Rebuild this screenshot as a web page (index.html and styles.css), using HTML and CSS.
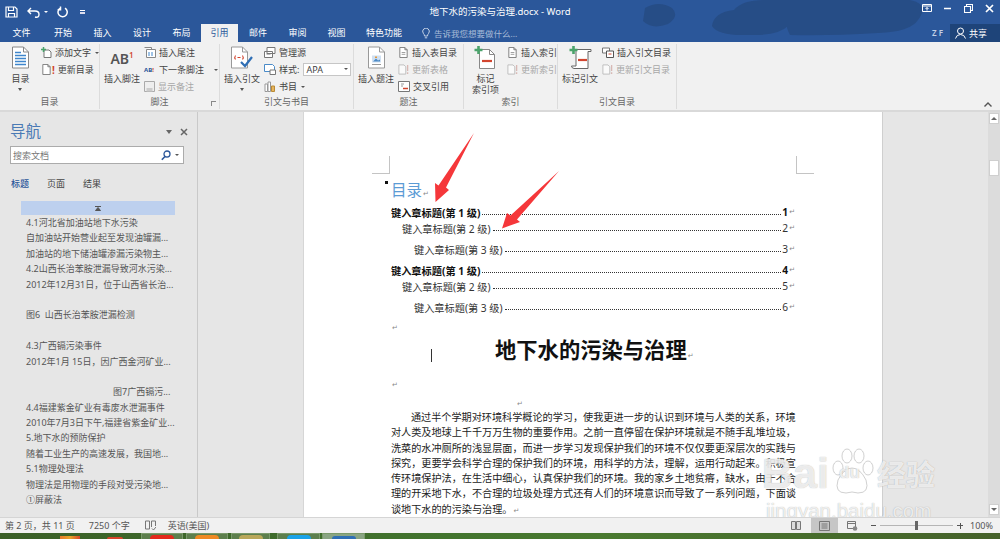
FILE: index.html
```html
<!DOCTYPE html>
<html lang="zh-CN">
<head>
    <meta charset="UTF-8">
    <meta name="viewport" content="width=device-width, initial-scale=1.0">
    <title>地下水的污染与治理.docx - Word</title>
    <link rel="stylesheet" href="styles.css">
</head>
<body>

<svg class="defs" width="0" height="0">
    <symbol id="doc" viewBox="0 0 12 12">
        <path d="M2 .5h5.5L10 3v8.5H2z" fill="#fff" stroke="#777"/>
        <path d="M7.5 .5V3H10" fill="none" stroke="#777"/>
    </symbol>
    <symbol id="doc-off" viewBox="0 0 12 12">
        <path d="M1 1h5.5L8.5 3v8H1z" fill="#fafafa" stroke="#bbb"/>
        <path d="M10.5 1v6.5M10.5 9v2" stroke="#d8b8b4" stroke-width="1.4"/>
    </symbol>
</svg>

<header class="header">
    <svg class="clouds" width="1000" height="42" viewBox="0 0 1000 42">
        <path d="M645 8q14-8 27 0 8 8-4 16-16 6-25-3zM712 26q2-14 22-16 8-10 30-10h30q10 10-6 26-10 10-40 9-30 1-36-9zM790 0h120q20 4 8 20-8 12-40 13-50 3-88 2-8-14 0-35z" fill="#25497f" opacity=".75"/>
    </svg>
    <div class="titlebar">
        <div class="qat">
            <svg width="13" height="12" viewBox="0 0 13 12"><path d="M1 1h9l2 2v8H1zM3.5 1v3.5h5V1M3.5 11V7.5h6V11" fill="none" stroke="#fff" stroke-width="1.2"/></svg>
            <svg class="qat-undo" width="14" height="11" viewBox="0 0 14 11"><path d="M4 1 1 4l3 3M1 4h7q4 0 4 3.5T8 10" fill="none" stroke="#fff" stroke-width="1.4"/></svg>
            <span class="qat-caret"></span>
            <svg class="qat-redo" width="12" height="12" viewBox="0 0 12 12"><path d="M8 2.2A4.6 4.6 0 1 1 3.6 2M3.5 .5v3.2H.6" fill="none" stroke="#fff" stroke-width="1.5"/></svg>
            <span class="qat-more"></span>
        </div>
        <div class="doc-title">地下水的污染与治理.docx - Word</div>
        <div class="win-btns">
            <svg width="10" height="8" viewBox="0 0 10 8"><path d="M.5 .5h9v7h-9zM.5 2h9M5 6.5V3.5M3.5 5 5 3.5 6.500 5" fill="none" stroke="#fff"/></svg>
            <svg width="8" height="8" viewBox="0 0 8 8"><path d="M0 4.500h7" stroke="#fff" stroke-width="1.500"/></svg>
            <svg width="9" height="9" viewBox="0 0 9 9"><path d="M.5 2.500h6v6h-6zM2.500 2.500v-2h6v6h-2" fill="none" stroke="#fff" stroke-width="1.100"/></svg>
            <svg width="9" height="9" viewBox="0 0 9 9"><path d="M1 1l7 7M8 1 1 8" stroke="#fff" stroke-width="1.700"/></svg>
        </div>
    </div>
    <div class="tabs">
        <div class="tab tab-first">文件</div>
        <div class="tab tab-wide">开始</div>
        <div class="tab">插入</div>
        <div class="tab tab-wide">设计</div>
        <div class="tab">布局</div>
        <div class="tab tab-active">引用</div>
        <div class="tab tab-wide">邮件</div>
        <div class="tab">审阅</div>
        <div class="tab">视图</div>
        <div class="tab tab-long">特色功能</div>
        <div class="tell-me">
            <svg width="8" height="11" viewBox="0 0 8 11"><path d="M2.500 8Q2.500 6.500 1.300 5.300A3.300 3.300 0 1 1 6.700 5.300Q5.500 6.500 5.500 8zM2.800 9.800h2.400" fill="none" stroke="#c5d2e6"/></svg>
            <span>告诉我您想要做什么...</span>
        </div>
        <div class="user">Z F</div>
        <div class="share">
            <svg width="11" height="12" viewBox="0 0 11 12"><circle cx="5.500" cy="4" r="3" fill="none" stroke="#fff"/><path d="M.5 11.500Q1.500 7.500 5.500 7.500T10.500 11.500" fill="none" stroke="#fff"/></svg>
            <span>共享</span>
        </div>
    </div>
</header>

<section class="ribbon">
    <div class="group group-toc">
        <div class="group-body">
            <div class="big">
                <svg class="big-ico" width="17" height="22" viewBox="0 0 17 22"><path d="M.5 .5h11l5 5v16H.5z" fill="#fff" stroke="#888"/><path d="M11.500 .5v5h5" fill="none" stroke="#888"/><path d="M3 6h6M3 9h11M3 12h11M3 15h11M3 18h11" stroke="#3f86cc" stroke-width="1.300"/></svg>
                <span>目录</span>
                <span class="caret"></span>
            </div>
            <div class="smalls">
                <div class="small"><svg width="11" height="11" viewBox="0 0 11 11"><path d="M3 3h5l2 2v5.500H3z" fill="#fff" stroke="#777"/><path d="M2.500 0v5M0 2.500h5" stroke="#4ba36b" stroke-width="1.500"/></svg>添加文字<span class="caret-side"></span></div>
                <div class="small"><svg width="11" height="11" viewBox="0 0 12 12"><use href="#doc"/></svg><b class="bang">!</b>更新目录</div>
            </div>
        </div>
        <div class="group-label">目录</div>
    </div>

    <div class="group group-foot">
        <div class="group-body">
            <div class="big big-foot">
                <div class="ab">AB<sup>1</sup></div>
                <span>插入脚注</span>
            </div>
            <div class="smalls">
                <div class="small"><svg width="12" height="11" viewBox="0 0 12 11"><path d="M.5 .5h7v2M2.500 2.500h9v8h-9z" fill="#fff" stroke="#888"/><path d="M5 5v4M8 5v4" stroke="#3f86cc"/></svg>插入尾注</div>
                <div class="small"><span class="ab-next">AB<i>!</i></span>下一条脚注<span class="caret-side caret-far"></span></div>
                <div class="small small-off"><svg width="11" height="11" viewBox="0 0 11 11"><path d="M.5 .5h10v10H.5z" fill="#eee" stroke="#aaa"/><path d="M2.500 7h6v3.500h-6z" fill="#ccc"/></svg>显示备注</div>
            </div>
        </div>
        <div class="group-label">脚注</div>
        <span class="launcher"></span>
    </div>

    <div class="group group-cite">
        <div class="group-body">
            <div class="big">
                <svg class="big-ico" width="22" height="22" viewBox="0 0 22 22"><path d="M.5 .5h11l5 5v16H.5z" fill="#fff" stroke="#999"/><path d="M11.500 .5v5h5" fill="none" stroke="#999"/><path d="M4.500 9q-1.500 2 0 4M11.500 9q1.500 2 0 4M6.500 11h3" fill="none" stroke="#d2452f" stroke-width="1.100"/><path d="M10 15.500l4 4 7-9" fill="none" stroke="#2f6fb5" stroke-width="2.200"/></svg>
                <span>插入引文</span>
                <span class="caret"></span>
            </div>
            <div class="smalls">
                <div class="small"><svg width="12" height="11" viewBox="0 0 12 11"><path d="M3 .5h8v6H3zM.5 4.500h8v6h-8z" fill="#fff" stroke="#777"/><path d="M2.500 7h4" stroke="#777"/></svg>管理源</div>
                <div class="small"><svg width="12" height="11" viewBox="0 0 12 11"><path d="M.5 .5h8l2 2v5h-10z" fill="#fff" stroke="#4a8bc8"/><path d="M6 6h5.500v4.500H6z" fill="#fff" stroke="#777"/></svg>样式:<div class="select">APA<span class="select-caret"></span></div></div>
                <div class="small"><svg width="12" height="11" viewBox="0 0 12 11"><path d="M1 3h2.500v7.500H1zM4 1h2.500v9.500H4z" fill="#fff" stroke="#999"/><path d="M7.500 5h3v5.500h-3z" fill="#e7b45c" stroke="#b98a35"/></svg>书目<span class="caret-side"></span></div>
            </div>
        </div>
        <div class="group-label">引文与书目</div>
    </div>

    <div class="group group-cap">
        <div class="group-body">
            <div class="big">
                <svg class="big-ico" width="17" height="22" viewBox="0 0 17 22"><path d="M.5 .5h11l5 5v16H.5z" fill="#fff" stroke="#999"/><path d="M11.500 .5v5h5" fill="none" stroke="#999"/><path d="M4 9h9v7H4z" fill="#cfe0f2"/><path d="M5 15l3-3 2 2 2-1v2z" fill="#4c8ac6"/><path d="M7 10h2v1.500H7z" fill="#e59a3c"/><path d="M4 18h9" stroke="#999"/></svg>
                <span>插入题注</span>
            </div>
            <div class="smalls">
                <div class="small"><svg width="11" height="11" viewBox="0 0 12 12"><use href="#doc"/><path d="M4 6h4M4 8h4" stroke="#999"/></svg>插入表目录</div>
                <div class="small small-off"><svg width="11" height="11" viewBox="0 0 12 12"><use href="#doc-off"/></svg>更新表格</div>
                <div class="small"><svg width="12" height="11" viewBox="0 0 12 11"><path d="M.5 .5h11v10H.5z" fill="#fff" stroke="#777"/><path d="M3 3h3M3 5h2" stroke="#999"/><path d="M5 7.500h5" stroke="#d2452f" stroke-width="1.500"/></svg>交叉引用</div>
            </div>
        </div>
        <div class="group-label">题注</div>
    </div>

    <div class="group group-index">
        <div class="group-body">
            <div class="big big-two">
                <svg class="big-ico" width="22" height="23" viewBox="0 0 22 23"><path d="M5.500 3.500h10l5 5v14h-15z" fill="#fff" stroke="#888"/><path d="M15.500 3.500v5h5" fill="none" stroke="#888"/><path d="M8 15h10" stroke="#d2452f" stroke-width="2.200"/><path d="M4.500 0v8M.5 4h8" stroke="#4ba36b" stroke-width="2.600"/></svg>
                <span>标记</span>
                <span>索引项</span>
            </div>
            <div class="smalls">
                <div class="small"><svg width="11" height="11" viewBox="0 0 12 12"><use href="#doc"/><path d="M4 6h4M4 8h4" stroke="#999"/></svg>插入索引</div>
                <div class="small small-off"><svg width="11" height="11" viewBox="0 0 12 12"><use href="#doc-off"/></svg>更新索引</div>
            </div>
        </div>
        <div class="group-label">索引</div>
    </div>

    <div class="group group-auth">
        <div class="group-body">
            <div class="big">
                <svg class="big-ico" width="23" height="23" viewBox="0 0 23 23"><path d="M7 3.500h15v2h-3v17H5q-2.500-.5-2.500-2.500H7z" fill="#fff" stroke="#666"/><path d="M9 14h9" stroke="#d2452f" stroke-width="2.200"/><path d="M4.500 0v8M.5 4h8" stroke="#4ba36b" stroke-width="2.600"/></svg>
                <span>标记引文</span>
            </div>
            <div class="smalls">
                <div class="small"><svg width="12" height="11" viewBox="0 0 12 11"><path d="M.5 1h7v5h-7z" fill="#fff" stroke="#777"/><path d="M4.500 4h7v6.500h-7z" fill="#fff" stroke="#555"/><path d="M6.500 7h3" stroke="#d2452f"/></svg>插入引文目录</div>
                <div class="small small-off"><svg width="11" height="11" viewBox="0 0 12 12"><use href="#doc-off"/></svg>更新引文目录</div>
            </div>
        </div>
        <div class="group-label">引文目录</div>
    </div>

    <svg class="collapse" width="8" height="5" viewBox="0 0 8 5"><path d="M.5 4.500 4 1l3.500 3.500" fill="none" stroke="#555" stroke-width="1.400"/></svg>
</section>

<main class="main">
    <aside class="nav">
        <div class="nav-head">
            <div class="nav-title">导航</div>
            <span class="nav-caret"></span>
            <svg width="8" height="8" viewBox="0 0 8 8"><path d="M1 1l6 6M7 1 1 7" stroke="#666" stroke-width="1.500"/></svg>
        </div>
        <div class="nav-search">
            <span>搜索文档</span>
            <svg width="10" height="11" viewBox="0 0 10 11"><circle cx="6" cy="4" r="3" fill="none" stroke="#2b579a" stroke-width="1.300"/><path d="M4 6.500.8 9.800" stroke="#2b579a" stroke-width="1.600"/></svg>
            <span class="search-caret"></span>
        </div>
        <div class="nav-tabs">
            <span class="nav-tab nav-tab-on">标题</span>
            <span class="nav-tab">页面</span>
            <span class="nav-tab">结果</span>
        </div>
        <div class="nav-top"><svg width="6" height="5" viewBox="0 0 6 5"><path d="M0 .5h6M.5 4.500h5L3 1.500z" stroke="#555" fill="#555"/></svg></div>
        <ul class="nav-list">
            <li>4.1河北省加油站地下水污染</li>
            <li>自加油站开始营业起至发现油罐漏...</li>
            <li>加油站的地下储油罐渗漏污染物主...</li>
            <li>4.2山西长治苯胺泄漏导致河水污染...</li>
            <li>2012年12月31日，位于山西省长治...</li>
            <li></li>
            <li>图6&nbsp; 山西长治苯胺泄漏检测</li>
            <li></li>
            <li>4.3广西镉污染事件</li>
            <li>2012年1月 15日，因广西金河矿业...</li>
            <li></li>
            <li class="nav-far">图7广西镉污...</li>
            <li>4.4福建紫金矿业有毒废水泄漏事件</li>
            <li>2010年7月3日下午,福建省紫金矿业...</li>
            <li>5.地下水的预防保护</li>
            <li>随着工业生产的高速发展，我国地...</li>
            <li>5.1物理处理法</li>
            <li>物理法是用物理的手段对受污染地...</li>
            <li>①屏蔽法</li>
        </ul>
    </aside>

    <div class="doc">
        <article class="page">
            <h1 class="toc-title">目录<span class="ret">↵</span></h1>
            <div class="toc toc-1"><span>键入章标题(第 1 级)</span><i class="leader"></i><span>1</span><span class="ret">↵</span></div>
            <div class="toc toc-2"><span>键入章标题(第 2 级)</span><i class="leader"></i><span>2</span><span class="ret">↵</span></div>
            <div class="toc toc-3"><span>键入章标题(第 3 级)</span><i class="leader"></i><span>3</span><span class="ret">↵</span></div>
            <div class="toc toc-1 toc-gap"><span>键入章标题(第 1 级)</span><i class="leader"></i><span>4</span><span class="ret">↵</span></div>
            <div class="toc toc-2"><span>键入章标题(第 2 级)</span><i class="leader"></i><span>5</span><span class="ret">↵</span></div>
            <div class="toc toc-3"><span>键入章标题(第 3 级)</span><i class="leader"></i><span>6</span><span class="ret">↵</span></div>
            <div class="mark mark-a"><span class="ret">↵</span></div>
            <h2 class="doc-head">地下水的污染与治理<span class="ret">↵</span></h2>
            <div class="mark mark-b"><span class="ret">↵</span></div>
            <div class="mark mark-c"><span class="ret">↵</span></div>
            <p class="para">
                <span class="line line-first">通过半个学期对环境科学概论的学习，使我更进一步的认识到环境与人类的关系，环境</span>
                <span class="line">对人类及地球上千千万万生物的重要作用。之前一直停留在保护环境就是不随手乱堆垃圾，</span>
                <span class="line">洗菜的水冲厕所的浅显层面，而进一步学习发现保护我们的环境不仅仅要更深层次的实践与</span>
                <span class="line">探究，更要学会科学合理的保护我们的环境，用科学的方法，理解，运用行动起来。积极宣</span>
                <span class="line">传环境保护法，在生活中细心，认真保护我们的环境。我的家乡土地贫瘠，缺水，由于不合</span>
                <span class="line">理的开采地下水，不合理的垃圾处理方式还有人们的环境意识而导致了一系列问题，下面谈</span>
                <span class="line line-last">谈地下水的的污染与治理。<span class="ret">↵</span></span>
            </p>
            <i class="crop crop-left"></i>
            <i class="crop crop-right"></i>
            <i class="dot"></i>
            <i class="cursor"></i>
        </article>
    </div>

    <div class="vscroll">
        <div class="vbtn"><span class="vup"></span></div>
        <div class="vthumb"></div>
        <div class="vbtn vbtn-down"><span class="vdown"></span></div>
    </div>

    <!-- red arrows drawn over the page -->
    <svg class="arrows" width="1000" height="405" viewBox="0 112 1000 405">
        <path d="M474 133 446 187.500 449 190 435.500 202 435 183 438.500 185.500z" fill="#f5373a"/>
        <path d="M559 171 517 219.500 520 222 502 228.500 507 213 510.500 215.500z" fill="#f5373a"/>
    </svg>

    <!-- baidu watermark -->
    <div class="wm">
        <div class="wm-top">
            <span class="wm-bai">Bai</span>
            <svg width="44" height="50" viewBox="0 0 44 50" class="wm-paw"><g fill="rgba(255,255,255,.55)" stroke="rgba(150,150,150,.45)"><ellipse cx="8" cy="20" rx="5" ry="7"/><ellipse cx="17" cy="8" rx="5" ry="7"/><ellipse cx="29" cy="8" rx="5" ry="7"/><ellipse cx="38" cy="20" rx="5" ry="7"/><path d="M22 20q8 0 14 12 4 13-8 13-6-2-12 0-12 0-8-13 6-12 14-12z"/></g></svg>
            <span class="wm-du">du</span>
            <span class="wm-jy">经验</span>
        </div>
        <div class="wm-url">jingyan.baidu.com</div>
    </div>
</main>

<footer class="status">
    <span class="st-page">第 2 页，共 11 页</span>
    <span class="st-words">7250 个字</span>
    <svg class="st-book" width="11" height="11" viewBox="0 0 11 11"><path d="M.5 1h4v8h-4zM6.500 1h4v5M6.500 1v6" fill="none" stroke="#777"/><path d="M7 8.500l1.500 1.500L11 7" fill="none" stroke="#777"/></svg>
    <span>英语(美国)</span>
    <div class="views">
        <svg width="10" height="9" viewBox="0 0 10 9"><path d="M.5 .5h4v8h-4zM5.500 .5h4v8h-4z" fill="#ddd" stroke="#777"/></svg>
        <div class="view-on"><svg width="11" height="10" viewBox="0 0 11 10"><path d="M.5 .5h10v9H.5zM2.500 3h6M2.500 5h6M2.500 7h6" fill="none" stroke="#777"/></svg></div>
        <svg class="view-web" width="11" height="10" viewBox="0 0 11 10"><path d="M.5 .5h8v7h-8zM.5 2.500h8" fill="none" stroke="#777"/><circle cx="8" cy="7.500" r="2.300" fill="#888"/></svg>
    </div>
    <div class="zoom">
        <span class="zoom-minus"></span>
        <div class="zoom-track"><i class="zoom-thumb"></i></div>
        <span class="zoom-plus"></span>
    </div>
    <span class="st-pct">100%</span>
</footer>

<div class="taskbar">
    <i class="tray tray-a"></i>
    <i class="tray tray-b"></i>
    <div class="task task-1"><i></i></div>
    <div class="task task-2"><i></i></div>
    <div class="task task-3"><i></i></div>
    <div class="task task-4"><i></i></div>
    <div class="task task-5"><i></i></div>
</div>

</body>
</html>
```

FILE: styles.css
```css
* {
    box-sizing: border-box;
}

html, body {
    margin: 0;
    height: 539px;
    overflow: hidden;
}

body {
    display: flex;
    flex-direction: column;
    font-family: "Noto Sans", "Noto Sans CJK SC", sans-serif;
    font-size: 9px;
    color: #444;
    background-color: #e6e6e6;
}

.defs {
    display: block;
    height: 0;
}

/* title bar and tabs */
.header {
    position: relative;
    flex: none;
    height: 42px;
    background-color: #2b579a;
    color: #fff;
    overflow: hidden;
}

.clouds {
    position: absolute;
    left: 0;
    top: 0;
}

.titlebar {
    position: relative;
    display: grid;
    grid-template-columns: 1fr auto 1fr;
    align-items: center;
    height: 24px;
}

.qat {
    display: flex;
    align-items: center;
    padding-left: 5px;
}

.qat-undo {
    margin-left: 9px;
}

.qat-caret {
    margin-left: 3px;
    border-top: 2px solid #fff;
    border-left: 2px solid transparent;
    border-right: 2px solid transparent;
}

.qat-redo {
    margin-left: 9px;
}

.qat-more {
    width: 5px;
    height: 4px;
    margin-left: 11px;
    border-top: 1px solid #fff;
    border-bottom: 2px solid #dde;
}

.doc-title {
    font-size: 9.5px;
    line-height: 22px;
}

.win-btns {
    display: flex;
    align-items: center;
    justify-content: flex-end;
    gap: 12px;
    padding-right: 6px;
    padding-bottom: 8px;
    height: 24px;
}

.tabs {
    position: relative;
    display: flex;
    align-items: stretch;
    height: 18px;
}

.tab {
    width: 39px;
    line-height: 18px;
    text-align: center;
    font-size: 9px;
}

.tab-first {
    width: 43px;
}

.tab-wide {
    width: 40px;
}

.tab-long {
    width: 56px;
}

.tab-active {
    width: 37px;
    background-color: #f1f1f1;
    color: #2b579a;
}

.tell-me {
    display: flex;
    align-items: center;
    gap: 4px;
    margin-left: 10px;
    font-size: 8.5px;
    color: #a9bcd8;
}

.user {
    margin-left: auto;
    margin-right: 7px;
    line-height: 18px;
    font-size: 8px;
    font-weight: 600;
    color: #c5d2e6;
}

.share {
    display: flex;
    align-items: center;
    gap: 3px;
    width: 50px;
    padding-left: 5px;
    background-color: #1e4479;
}

/* ribbon */
.ribbon {
    position: relative;
    flex: none;
    display: flex;
    height: 70px;
    padding-top: 2px;
    background-color: #f1f1f1;
    border-bottom: 2px solid #d9d9d9;
}

.group {
    position: relative;
    display: flex;
    flex-direction: column;
    height: 65px;
    border-right: 1px solid #dcdcdc;
}

.group-toc { width: 100px; }
.group-foot { width: 120px; }
.group-cite { width: 134px; }
.group-cap { width: 110px; }
.group-index { width: 94px; }
.group-auth { width: 119px; }

.group-body {
    flex: 1;
    display: flex;
    min-height: 0;
}

.group-label {
    height: 14px;
    line-height: 14px;
    text-align: center;
    color: #666;
}

.big {
    display: flex;
    flex-direction: column;
    align-items: center;
    width: 36px;
    margin-left: 4px;
    line-height: 11px;
    white-space: nowrap;
}

.big-ico {
    height: 23px;
    margin: 2px 0 4px;
}

.big-two span {
    line-height: 11px;
}

.big-foot {
    margin-left: 4px;
}

.ab {
    height: 23px;
    margin: 5px 0 1px;
    font-size: 14px;
    font-weight: 600;
    line-height: 20px;
    color: #555;
}

.ab sup {
    font-size: 8px;
    line-height: 0;
    color: #d2452f;
}

.caret {
    margin-top: 4px;
    border-top: 3px solid #555;
    border-left: 2px solid transparent;
    border-right: 2px solid transparent;
}

.smalls {
    display: flex;
    flex-direction: column;
    margin-left: 4px;
}

.small {
    display: flex;
    align-items: center;
    gap: 3px;
    height: 17px;
    white-space: nowrap;
}

.small-off {
    color: #a8a8a8;
}

.bang {
    margin-left: -3px;
    font-size: 10px;
    color: #d2452f;
}

.caret-side {
    margin-left: 1px;
    border-top: 2px solid #555;
    border-left: 2px solid transparent;
    border-right: 2px solid transparent;
}

.caret-far {
    margin-left: 7px;
}

.ab-next {
    width: 12px;
    font-size: 6px;
    font-weight: 700;
    color: #2b579a;
    line-height: 8px;
}

.ab-next i {
    color: #d2452f;
    font-style: normal;
}

.select {
    position: relative;
    width: 48px;
    height: 13px;
    margin-left: 1px;
    padding-left: 2px;
    line-height: 12px;
    background-color: #fff;
    border: 1px solid #c6c6c6;
}

.select-caret {
    position: absolute;
    right: 2px;
    top: 4px;
    border-top: 2px solid #555;
    border-left: 2px solid transparent;
    border-right: 2px solid transparent;
}

.launcher {
    position: absolute;
    right: 3px;
    bottom: 3px;
    width: 5px;
    height: 5px;
    border-left: 1px solid #888;
    border-top: 1px solid #888;
}

.collapse {
    position: absolute;
    right: 8px;
    bottom: 3px;
}

/* main area */
.main {
    position: relative;
    flex: 1;
    display: flex;
    min-height: 0;
    overflow: hidden;
}

.nav {
    flex: none;
    width: 198px;
    padding: 10px 0 0 10px;
    background-color: #e6e6e6;
    border-right: 1px solid #c9c9c9;
}

.nav-head {
    display: flex;
    align-items: center;
    height: 19px;
    padding-right: 9px;
}

.nav-title {
    flex: 1;
    font-size: 15.5px;
    line-height: 19px;
    color: #4a7ab5;
}

.nav-caret {
    margin-right: 8px;
    border-top: 4px solid #666;
    border-left: 3px solid transparent;
    border-right: 3px solid transparent;
}

.nav-search {
    display: flex;
    align-items: center;
    width: 174px;
    height: 18px;
    margin-top: 5px;
    padding: 0 4px 0 2px;
    background-color: #fff;
    border: 1px solid #ababab;
    color: #777;
}

.nav-search span:first-child {
    flex: 1;
}

.search-caret {
    margin-left: 4px;
    border-top: 2px solid #555;
    border-left: 2px solid transparent;
    border-right: 2px solid transparent;
}

.nav-tabs {
    display: flex;
    gap: 18px;
    height: 18px;
    margin-top: 11px;
    padding-left: 1px;
    line-height: 18px;
}

.nav-tab-on {
    font-weight: 500;
    color: #2b579a;
}

.nav-top {
    display: flex;
    align-items: center;
    justify-content: center;
    width: 154px;
    height: 14px;
    margin: 8px 0 0 11px;
    background-color: #bdd0ee;
}

.nav-list {
    margin: 0;
    padding: 0 0 0 16px;
    list-style: none;
    color: #555;
}

.nav-list li {
    height: 15.4px;
    line-height: 15.4px;
    white-space: nowrap;
}

.nav-far {
    padding-left: 87px;
}

.doc {
    flex: 1;
    min-width: 0;
    padding-left: 105px;
    background-color: #e6e6e6;
}

.page {
    position: relative;
    width: 580px;
    height: 100%;
    padding: 67px 87px 0;
    background-color: #fff;
    border-left: 1px solid #d6d6d6;
    border-right: 1px solid #cfcfcf;
    color: #222;
    font-size: 10.2px;
}

.ret {
    margin-left: 1px;
    font-family: "DejaVu Sans", sans-serif;
    font-size: 7px;
    font-weight: 400;
    color: #888;
}

.toc-title {
    height: 25px;
    margin: 0;
    font-size: 15.5px;
    font-weight: 400;
    line-height: 22px;
    color: #5b9bd5;
}

.toc {
    display: flex;
    align-items: center;
    height: 16px;
    white-space: pre;
}

.toc-1 {
    font-weight: 700;
    color: #111;
}

.toc-2 {
    padding-left: 11px;
    color: #333;
}

.toc-3 {
    margin-top: 5px;
    padding-left: 23px;
    color: #333;
}

.toc-gap {
    margin-top: 5px;
}

.leader {
    flex: 1;
    height: 1px;
    margin: 5px 1px 0 2px;
    border-bottom: 1px dotted #333;
}

.mark {
    height: 15px;
    line-height: 15px;
}

.mark-a {
    margin-top: 4px;
}

.doc-head {
    height: 30px;
    margin: 1px 0 0 104px;
    font-size: 21.3px;
    font-weight: 700;
    line-height: 30px;
    color: #111;
    white-space: nowrap;
}

.mark-b {
    margin-top: 11px;
}

.mark-c {
    margin-top: 4px;
    padding-left: 125px;
}

.para {
    margin: 0;
    font-size: 10.15px;
    line-height: 15.3px;
}

.line {
    display: block;
    text-align: justify;
    text-align-last: justify;
    white-space: nowrap;
}

.line-first {
    padding-left: 20px;
}

.line-last {
    text-align-last: left;
}

.crop {
    position: absolute;
    top: 44px;
    width: 18px;
    height: 18px;
    border-bottom: 1px solid #c4c4c4;
}

.crop-left {
    left: 68px;
    border-right: 1px solid #c4c4c4;
}

.crop-right {
    left: 492px;
    border-left: 1px solid #c4c4c4;
}

.dot {
    position: absolute;
    left: 81px;
    top: 69px;
    width: 3px;
    height: 3px;
    background-color: #111;
}

.cursor {
    position: absolute;
    left: 127px;
    top: 237px;
    width: 1px;
    height: 13px;
    background-color: #333;
}

.vscroll {
    flex: none;
    display: flex;
    flex-direction: column;
    align-items: center;
    width: 12px;
    padding: 1px 0 2px;
    background-color: #dcdcdc;
}

.vbtn {
    display: flex;
    align-items: center;
    justify-content: center;
    width: 10px;
    height: 11px;
    background-color: #fff;
    border: 1px solid #cfcfcf;
}

.vbtn-down {
    margin-top: auto;
}

.vup {
    border-bottom: 3px solid #666;
    border-left: 3px solid transparent;
    border-right: 3px solid transparent;
}

.vdown {
    border-top: 3px solid #666;
    border-left: 3px solid transparent;
    border-right: 3px solid transparent;
}

.vthumb {
    width: 10px;
    height: 16px;
    margin-top: 36px;
    background-color: #fff;
    border: 1px solid #cfcfcf;
}

.arrows {
    position: absolute;
    left: 0;
    top: 0;
}

.wm {
    position: absolute;
    left: 766px;
    top: 335px;
    width: 190px;
    color: rgba(255, 255, 255, 0.8);
    text-shadow: 0 0 1px rgba(110, 110, 110, 0.6);
    white-space: nowrap;
}

.wm-top {
    display: flex;
    align-items: center;
    height: 52px;
}

.wm-bai {
    font-family: "Liberation Sans", sans-serif;
    font-size: 43px;
    font-weight: 700;
    margin-left: -4px;
    width: 70px;
    overflow: hidden;
}

.wm-paw {
    margin-left: -2px;
}

.wm-du {
    margin-left: -35px;
    width: 35px;
    font-family: "Liberation Sans", sans-serif;
    font-size: 17px;
    font-weight: 700;
}

.wm-jy {
    margin-left: 3px;
    font-size: 29px;
    font-weight: 700;
}

.wm-url {
    font-family: "Liberation Sans", sans-serif;
    font-size: 20.500px;
    line-height: 22px;
    margin-top: 1px;
}

/* status and task bar */
.status {
    flex: none;
    display: flex;
    align-items: center;
    height: 16px;
    padding-left: 5px;
    background-color: #f1f1f1;
    border-top: 1px solid #d5d5d5;
    color: #555;
    font-size: 9px;
}

.st-words {
    margin-left: 14px;
}

.st-book {
    margin: 0 12px 0 15px;
}

.views {
    display: flex;
    align-items: center;
    height: 15px;
    margin-left: auto;
}

.view-on {
    display: flex;
    align-items: center;
    justify-content: center;
    width: 27px;
    height: 15px;
    margin-left: 10px;
    background-color: #c6c6c6;
}

.view-web {
    margin-left: 9px;
}

.zoom {
    display: flex;
    align-items: center;
    margin-left: 13px;
}

.zoom-minus {
    width: 5px;
    height: 1px;
    background-color: #555;
}

.zoom-track {
    position: relative;
    width: 73px;
    height: 1px;
    margin: 0 4px;
    background-color: #b5b5b5;
}

.zoom-thumb {
    position: absolute;
    left: 35px;
    top: -4px;
    width: 3px;
    height: 9px;
    background-color: #666;
}

.zoom-plus {
    width: 6px;
    height: 6px;
    background:
        linear-gradient(#555, #555) center / 6px 1px no-repeat,
        linear-gradient(#555, #555) center / 1px 6px no-repeat;
}

.st-pct {
    width: 37px;
    padding-right: 7px;
    text-align: right;
}

.taskbar {
    position: relative;
    flex: none;
    display: flex;
    align-items: flex-end;
    height: 6px;
    background: linear-gradient(90deg, #3a5f27, #42742e 45%, #4a7a30 60%, #45612a);
    overflow: hidden;
}

.taskbar i {
    display: block;
}

.tray {
    height: 3px;
}

.tray-a {
    width: 20px;
    margin-left: 60px;
    background: linear-gradient(90deg, #e8782b, #e8a52b, #d8452b);
}

.tray-b {
    width: 16px;
    margin-left: 27px;
    height: 2px;
    background-color: #d8452b;
    border-radius: 8px 8px 0 0;
}

.task {
    display: flex;
    justify-content: center;
    align-items: flex-end;
    width: 42px;
    height: 6px;
    margin-left: 3px;
    background-color: #5d7f4d;
    border: 1px solid #7a9a6b;
    border-bottom: none;
}

.task i {
    width: 24px;
    height: 4px;
    border-radius: 4px 4px 0 0;
}

.task-1 { margin-left: 18px; }
.task-1 i { background-color: #e32a1c; }
.task-2 i { background-color: #ef8a23; }
.task-3 { width: 39px; }
.task-3 i { background-color: #b9a85a; }
.task-4 { width: 43px; margin-left: 7px; }
.task-4 i { background-color: #1aa3e8; }
.task-5 { width: 43px; margin-left: 2px; background-color: #8aa583; }
.task-5 i { background-color: #2f6fb5; height: 3px; }
```
